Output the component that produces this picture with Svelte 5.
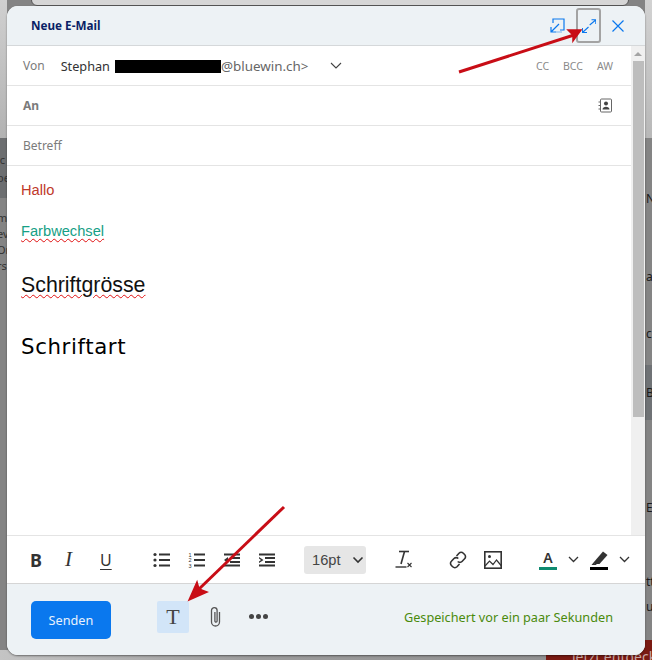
<script lang="ts">
  const recipients = ['CC', 'BCC', 'AW'];
  // page behind the dialog, only slivers of its text stay visible
  const leftEdge = [
    { text: 'ic', top: 152 },
    { text: 'oe', top: 170 },
    { text: 'm', top: 210 },
    { text: 'ev', top: 226 },
    { text: 'Or', top: 242 },
    { text: 'rs', top: 258 },
  ];
  const rightEdge = [
    { text: 'N', top: 190 },
    { text: 'a', top: 268 },
    { text: 'cl', top: 325 },
    { text: 'Bl', top: 384 },
    { text: 'E', top: 499 },
    { text: 'tt', top: 573 },
    { text: 'u', top: 598 },
  ];
</script>

<div class="backdrop">
  <div class="strip left-top"></div>
  <div class="strip left-dark"></div>
  <div class="strip right-top"></div>
  <div class="strip right-dark"></div>
  <div class="strip bottom"></div>
  {#each leftEdge as item}
    <span class="edge-text left" style={'top: ' + item.top + 'px'}>{item.text}</span>
  {/each}
  {#each rightEdge as item}
    <span class="edge-text right" style={'top: ' + item.top + 'px'}>{item.text}</span>
  {/each}
  <div class="dlg-top"></div>
  <div class="promo">jetzt entdecken</div>

  <section class="composer">
    <header class="title-bar">
      <h1>Neue E-Mail</h1>
      <div class="window-actions">
        <button class="icon-btn" aria-label="Abdocken">
          <svg width="15" height="15" viewBox="0 0 15 15" fill="none" stroke="#0a78ee" stroke-width="1.2">
            <path d="M3 5V1h11v11H10" />
            <path d="M1 14l8-8M1 9v5h5" />
            <path d="M6 14h6" stroke-opacity="0.5" />
          </svg>
        </button>
        <button class="icon-btn expand" aria-label="Maximieren">
          <svg width="14" height="14" viewBox="0 0 14 14" fill="none" stroke="#0a78ee" stroke-width="1.1">
            <path d="M7.7 6l6-5M9.5 .8h4.300V5" />
            <path d="M.5 13.5l6-5.5M.4 9v4.600H5" />
          </svg>
        </button>
        <button class="icon-btn close" aria-label="Schliessen">
          <svg width="14" height="14" viewBox="0 0 14 14" fill="none" stroke="#0a78ee" stroke-width="1.2">
            <path d="M1.5 1.5l11 11M12.5 1.5l-11 11" />
          </svg>
        </button>
      </div>
    </header>

    <div class="scroll-wrap">
      <div class="fields">
        <div class="row from-row">
          <span class="label">Von</span>
          <span class="sender">Stephan</span>
          <span class="redacted"></span>
          <span class="address">@bluewin.ch&gt;</span>
          <svg class="from-caret" width="12" height="7" viewBox="0 0 12 7" fill="none" stroke="#444" stroke-width="1.1">
            <path d="M1 1l5 5 5-5" />
          </svg>
          <div class="recipients">
            {#each recipients as name}
              <span>{name}</span>
            {/each}
          </div>
        </div>

        <div class="row to-row">
          <strong class="label">An</strong>
          <svg width="14" height="15" viewBox="0 0 14 15" fill="none" stroke="#666" stroke-width="1">
            <rect x="2.500" y="1" width="11" height="13" rx="1" />
            <path d="M0.500 4h2.500M0.500 7.500h2.500M0.500 11h2.500" />
            <circle cx="8" cy="5.500" r="2" fill="#444" stroke="none" />
            <path d="M4.500 11.500c0-3.600 7-3.600 7 0z" fill="#444" stroke="none" />
          </svg>
        </div>

        <div class="row subject-row">
          <span class="label">Betreff</span>
        </div>

        <div class="editor">
          <p class="hallo">Hallo</p>
          <p class="wechsel"><span class="typo">Farbwechsel</span></p>
          <p class="groesse"><span class="typo">Schriftgrösse</span></p>
          <p class="art">Schriftart</p>
        </div>
      </div>

      <div class="scrollbar">
        <svg width="14" height="15" viewBox="0 0 14 15"><path d="M3 10l4-4 4 4z" fill="#a3a3a3" /></svg>
        <div class="thumb"></div>
      </div>
    </div>

    <div class="format-bar">
      <button class="fmt bold" aria-label="Fett">B</button>
      <button class="fmt italic" aria-label="Kursiv">I</button>
      <button class="fmt underline" aria-label="Unterstrichen">U</button>

      <div class="lists">
        <svg width="18" height="16" viewBox="0 0 18 16" fill="#333">
          <circle cx="2" cy="2.500" r="1.600" /><circle cx="2" cy="8" r="1.600" /><circle cx="2" cy="13.500" r="1.600" />
          <rect x="6" y="1.500" width="11" height="2" /><rect x="6" y="7" width="11" height="2" /><rect x="6" y="12.500" width="11" height="2" />
        </svg>
        <svg width="18" height="16" viewBox="0 0 18 16" fill="#333">
          <text x="0.500" y="4.500" font-size="5.500" font-family="Liberation Sans">1</text>
          <text x="0.500" y="10" font-size="5.500" font-family="Liberation Sans">2</text>
          <text x="0.500" y="15.500" font-size="5.500" font-family="Liberation Sans">3</text>
          <rect x="6" y="1.500" width="11" height="2" /><rect x="6" y="7" width="11" height="2" /><rect x="6" y="12.500" width="11" height="2" />
        </svg>
        <svg width="18" height="16" viewBox="0 0 18 16" fill="#333">
          <rect x="1" y="1.500" width="16" height="2" /><rect x="7" y="5" width="10" height="2" /><rect x="7" y="9" width="10" height="2" /><rect x="1" y="12.500" width="16" height="2" />
          <path d="M5 5v6L1 8z" />
        </svg>
        <svg width="18" height="16" viewBox="0 0 18 16" fill="#333">
          <rect x="1" y="1.500" width="16" height="2" /><rect x="7" y="5" width="10" height="2" /><rect x="7" y="9" width="10" height="2" /><rect x="1" y="12.500" width="16" height="2" />
          <path d="M1 5l4.500 3L1 11V9.500L3 8 1 6.500z" />
        </svg>
      </div>

      <div class="size-select">
        <span>16pt</span>
        <svg width="12" height="8" viewBox="0 0 12 8" fill="none" stroke="#333" stroke-width="1.6"><path d="M1.5 1.5L6 6l4.500-4.500" /></svg>
      </div>

      <svg class="clear" width="18" height="19" viewBox="0 0 18 19" fill="none" stroke="#333">
        <path d="M4 1.500h10" stroke-width="1.6" />
        <path d="M9.500 1.500L6 14" stroke-width="1.6" />
        <path d="M0.500 17h11" stroke-width="1.4" />
        <path d="M12.500 13l4 4M16.500 13l-4 4" stroke-width="1.1" />
      </svg>

      <svg class="link" width="18" height="18" viewBox="0 0 18 18" fill="none" stroke="#333" stroke-width="1.6">
        <path d="M7.500 5l2.500-2.800a3 3 0 0 1 4.300 0l1.300 1.300a3 3 0 0 1 0 4.300L13 10.500a3 3 0 0 1-4.300 0" />
        <path d="M10.500 13L8 15.800a3 3 0 0 1-4.300 0l-1.300-1.300a3 3 0 0 1 0-4.300L5 7.500a3 3 0 0 1 4.300 0" />
      </svg>

      <svg class="image" width="18" height="18" viewBox="0 0 18 18" fill="none" stroke="#333" stroke-width="1.6">
        <rect x="0.800" y="0.800" width="16.400" height="16.400" />
        <circle cx="5.500" cy="5.500" r="1.500" fill="#333" stroke="none" />
        <path d="M1 15l4.500-5 3.500 3.500 3.500-4.500 5 6" stroke-width="1.2" />
      </svg>

      <div class="colour text-colour">
        <span class="glyph">A</span>
        <span class="swatch teal"></span>
      </div>
      <svg class="caret" width="11" height="7" viewBox="0 0 11 7" fill="none" stroke="#333" stroke-width="1.3"><path d="M1 1l4.500 4.500L10 1" /></svg>

      <div class="colour marker-colour">
        <svg width="17" height="14" viewBox="0 0 17 14" fill="#333">
          <path d="M12 0.500l4.500 3.500-8 9H4L2.500 11.500z" />
          <path d="M2.500 11.500L0.500 14H6z" />
        </svg>
        <span class="swatch black"></span>
      </div>
      <svg class="caret" width="11" height="7" viewBox="0 0 11 7" fill="none" stroke="#333" stroke-width="1.3"><path d="M1 1l4.500 4.500L10 1" /></svg>
    </div>

    <footer class="footer">
      <button class="send">Senden</button>
      <button class="format-toggle" aria-label="Formatierung">T</button>
      <svg class="clip" width="13" height="22" viewBox="0 0 13 22" fill="none" stroke="#555" stroke-width="1.3">
        <path d="M10.500 6v10a4 4 0 0 1-8 0V4.500a2.800 2.800 0 0 1 5.600 0V15a1.100 1.100 0 0 1-2.200 0V6" />
      </svg>
      <div class="more" aria-label="Mehr"><i></i><i></i><i></i></div>
      <span class="saved">Gespeichert vor ein paar Sekunden</span>
    </footer>
  </section>

  <svg class="arrows" width="652" height="660" viewBox="0 0 652 660" fill="#c80d16" stroke="#c80d16">
    <path d="M459 72L574 35" stroke-width="3" fill="none" />
    <path d="M581 30L568 30 573 35 573 41z" stroke-width="1.5" />
    <path d="M284 507L198 590" stroke-width="3" fill="none" />
    <path d="M189 600L197 582 199 589 207 592z" stroke-width="1.5" />
  </svg>
</div>

<style>
  :global(body) {
    margin: 0;
  }

  .backdrop {
    position: relative;
    width: 652px;
    height: 660px;
    overflow: hidden;
    background: #848484;
    font-family: "Noto Sans", sans-serif;
  }

  .strip {
    position: absolute;
  }

  .left-top {
    left: 0;
    top: 0;
    width: 7px;
    height: 138px;
    background: linear-gradient(#d0d0d0, #b2b2b2);
  }

  .left-dark {
    left: 0;
    top: 138px;
    width: 7px;
    height: 60px;
    background: #6c6e70;
  }

  .right-top {
    left: 645px;
    top: 0;
    width: 7px;
    height: 138px;
    background: linear-gradient(#d2d2d2, #b8b8b8);
  }

  .right-dark {
    left: 645px;
    top: 365px;
    width: 7px;
    height: 55px;
    background: #6f7275;
  }

  .bottom {
    left: 0;
    top: 650px;
    width: 652px;
    height: 10px;
    background: linear-gradient(90deg, #c4c4c4, #9c9c9c 40%, #8e8e8e);
  }

  .dlg-top {
    position: absolute;
    top: -10px;
    left: 31px;
    width: 596px;
    height: 14px;
    border: 1px solid #555;
    border-radius: 6px;
    background: #d6d6d6;
  }

  .edge-text {
    position: absolute;
    font-size: 11px;
    color: #333;
  }

  .edge-text.left {
    left: -3px;
  }

  .edge-text.right {
    left: 646px;
    font-size: 12px;
    color: #1a1a1a;
  }

  .promo {
    position: absolute;
    left: 546px;
    top: 640px;
    width: 106px;
    height: 20px;
    padding: 8px 0 0 26px;
    box-sizing: border-box;
    background: #7a1a12;
    color: #c9a8a4;
    font-size: 14px;
    line-height: 17px;
    white-space: nowrap;
    overflow: hidden;
  }

  .composer {
    position: absolute;
    left: 7px;
    top: 6px;
    width: 638px;
    height: 649px;
    display: flex;
    flex-direction: column;
    border-radius: 11px;
    overflow: hidden;
    background: #fff;
    box-shadow: 0 1px 2px rgba(0, 0, 0, 0.45);
  }

  .title-bar {
    flex: 0 0 39px;
    display: flex;
    align-items: center;
    justify-content: space-between;
    padding: 0 20px 0 24px;
    background: #edf2f5;
    border-bottom: 1px solid #d5d8da;
  }

  h1 {
    margin: 0 0 2px;
    font-size: 11.7px;
    font-weight: 700;
    color: #0a1f66;
  }

  .window-actions {
    display: flex;
    align-items: center;
  }

  .icon-btn {
    display: flex;
    align-items: center;
    justify-content: center;
    padding: 0;
    border: 0;
    background: none;
  }

  .icon-btn.expand {
    width: 25px;
    height: 35px;
    margin-left: 11px;
    border: 2px solid #a3a3a3;
    border-radius: 3px;
  }

  .icon-btn.close {
    margin-left: 10px;
  }

  .scroll-wrap {
    flex: 1 1 auto;
    display: flex;
    min-height: 0;
    border-bottom: 1px solid #e4e4e4;
  }

  .fields {
    flex: 1 1 auto;
    display: flex;
    flex-direction: column;
  }

  .row {
    flex: 0 0 39px;
    display: flex;
    align-items: center;
    padding: 0 16px;
    border-bottom: 1px solid #e4e4e4;
    font-size: 12px;
  }

  .label {
    color: #7b7b7b;
  }

  .sender {
    margin-left: 16px;
    font-size: 12.7px;
    color: #333;
  }

  .redacted {
    width: 106px;
    height: 13px;
    margin: 2px 0 0 5px;
    background: #000;
  }

  .address {
    font-size: 13.4px;
    color: #666;
  }

  .from-caret {
    margin-left: 22px;
  }

  .recipients {
    display: flex;
    gap: 14px;
    margin-left: auto;
    padding-right: 2px;
    font-size: 10.5px;
    color: #8a8a8a;
  }

  .to-row {
    justify-content: space-between;
    padding-right: 19px;
  }

  .to-row strong {
    font-weight: 700;
  }

  .editor {
    flex: 1 1 auto;
    padding: 15px 14px 0;
    font-family: "Liberation Sans", sans-serif;
  }

  .editor p {
    margin: 0;
  }

  .hallo {
    font-size: 14.67px;
    line-height: 19px;
    color: #c0392b;
  }

  .wechsel {
    margin-top: 22px !important;
    font-size: 14.67px;
    line-height: 19px;
    color: #16a085;
  }

  .groesse {
    margin-top: 32px !important;
    font-size: 21.33px;
    line-height: 25px;
    color: #111;
  }

  .art {
    margin-top: 36px !important;
    font-family: "DejaVu Sans", sans-serif;
    font-size: 21.33px;
    letter-spacing: 0.6px;
    line-height: 26px;
    color: #000;
  }

  .typo {
    text-decoration: underline wavy #e01010 1px;
    text-underline-offset: 2px;
  }

  .scrollbar {
    flex: 0 0 14px;
    display: flex;
    flex-direction: column;
    align-items: center;
    background: #f0f0f0;
  }

  .thumb {
    width: 11px;
    height: 356px;
    background: #bdbdbd;
  }

  .format-bar {
    flex: 0 0 47px;
    display: flex;
    align-items: center;
    padding-left: 23px;
  }

  .fmt {
    width: 35px;
    padding: 0;
    border: 0;
    background: none;
    color: #333;
    font-family: "Noto Sans", sans-serif;
    font-size: 18px;
    text-align: left;
  }

  .bold {
    font-weight: 700;
  }

  .italic {
    font-family: "Liberation Serif", serif;
    font-style: italic;
    font-size: 21px;
  }

  .underline {
    width: 12px;
    font-size: 16px;
    text-decoration: underline;
    text-underline-offset: 3px;
  }

  .lists {
    display: flex;
    align-items: center;
    gap: 17px;
    margin-left: 41px;
  }

  .size-select {
    display: flex;
    align-items: center;
    justify-content: space-between;
    width: 62px;
    height: 28px;
    margin-left: 28px;
    padding: 0 2px 0 8px;
    box-sizing: border-box;
    border-radius: 3px;
    background: #e6e6e6;
    font-family: "Liberation Sans", sans-serif;
    font-size: 14.67px;
    color: #444;
  }

  .clear {
    margin-left: 29px;
  }

  .link {
    margin-left: 36px;
  }

  .image {
    margin-left: 17px;
  }

  .colour {
    display: flex;
    flex-direction: column;
    align-items: center;
    justify-content: flex-end;
    width: 18px;
    height: 20px;
    gap: 2px;
  }

  .text-colour {
    margin-left: 37px;
  }

  .marker-colour {
    margin-left: 11px;
  }

  .caret {
    margin-left: 11px;
  }

  .glyph {
    font-size: 14px;
    font-weight: 600;
    line-height: 14px;
    color: #333;
  }

  .swatch {
    flex: 0 0 3px;
    width: 18px;
  }

  .teal {
    background: #0f8a70;
  }

  .black {
    background: #000;
  }

  .footer {
    flex: 0 0 71px;
    display: flex;
    align-items: center;
    padding: 0 32px 0 24px;
    background: #edf2f5;
    border-top: 1px solid #d5d5d5;
  }

  .send {
    width: 80px;
    height: 38px;
    border: 0;
    border-radius: 5px;
    background: #0a78ee;
    color: #e8f2fd;
    font-family: "Noto Sans", sans-serif;
    font-size: 12.7px;
  }

  .format-toggle {
    width: 32px;
    height: 32px;
    margin: 0 0 6px 46px;
    padding: 0;
    border: 0;
    border-radius: 2px;
    background: #d2e5f8;
    color: #444;
    font-family: "Liberation Serif", serif;
    font-size: 22px;
  }

  .clip {
    margin: 0 0 6px 20px;
  }

  .more {
    display: flex;
    gap: 2px;
    margin: 0 0 6px 27px;
  }

  .more i {
    width: 5px;
    height: 5px;
    border-radius: 50%;
    background: #444;
  }

  .saved {
    margin: 0 0 6px auto;
    font-size: 12.7px;
    color: #4a8a0c;
  }

  .arrows {
    position: absolute;
    left: 0;
    top: 0;
    pointer-events: none;
  }
</style>
